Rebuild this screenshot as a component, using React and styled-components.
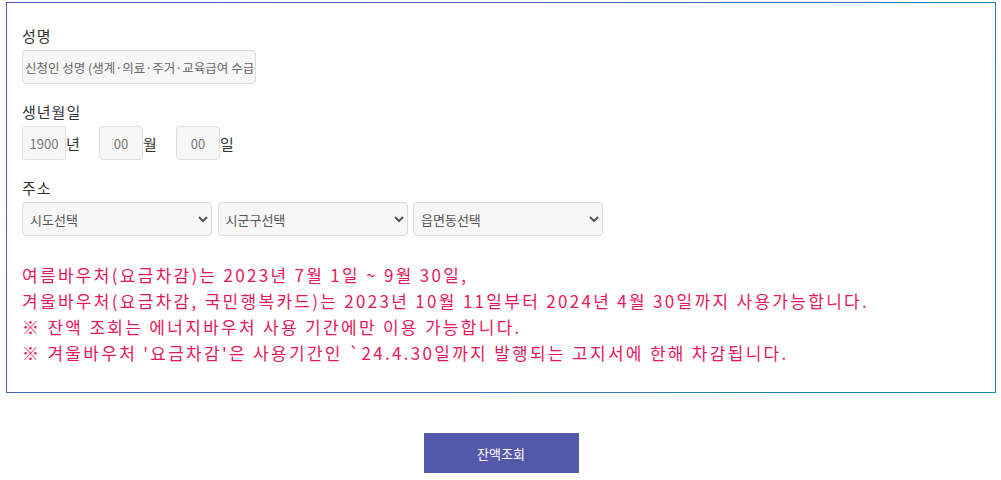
import React from 'react'
import styled, { createGlobalStyle } from 'styled-components'

const GlobalStyle = createGlobalStyle`
  body {
    margin: 0;
    background: #fff;
    font-family: "Noto Sans CJK KR", "Noto Sans", sans-serif;
    color: #333;
  }
`

const Page = styled.div`
  padding: 2px 5px 0 6px;
`

const Box = styled.div`
  border: 1px solid;
  border-image: linear-gradient(135deg, #5455b4 0%, #3a6fb0 50%, #1a8aa6 100%) 1;
  padding: 22px 15px 26px 15px;
`

const Field = styled.div`
  margin-bottom: 17px;
`

const Label = styled.div`
  font-size: 15px;
  line-height: 22px;
  letter-spacing: 1px;
  margin-bottom: 3px;
`

const TextInput = styled.input`
  box-sizing: border-box;
  width: 234px;
  height: 34px;
  padding: 0 2px;
  border: 1px solid #ddd;
  border-radius: 4px;
  background: #f7f7f7;
  font-family: inherit;
  font-size: 12.5px;
  color: #333;
  &::placeholder { color: #666; }
`

const DateRow = styled.div`
  display: flex;
  align-items: center;
`

const DateInput = styled.input`
  box-sizing: border-box;
  width: 44px;
  height: 34px;
  padding: 0;
  border: 1px solid #ddd;
  border-radius: 4px;
  background: #f7f7f7;
  font-family: inherit;
  font-size: 13px;
  text-align: center;
  color: #777;
  &::placeholder { color: #777; }
`

const Unit = styled.span`
  font-size: 15px;
  width: ${p => p.$w}px;
`

const SelectRow = styled.div`
  display: flex;
  gap: 5.5px;
`

const Select = styled.select`
  box-sizing: border-box;
  width: 190px;
  height: 34px;
  padding: 0 3px;
  border: 1px solid #ddd;
  border-radius: 4px;
  background: #f7f7f7;
  font-family: inherit;
  font-size: 13px;
  color: #555;
`

const Notice = styled.div`
  margin-top: 26px;
  color: #e8175d;
  font-size: 17px;
  line-height: 26px;
  letter-spacing: 2.3px;
`

const ButtonRow = styled.div`
  display: flex;
  justify-content: center;
  padding-top: 40px;
`

const SubmitButton = styled.button`
  width: 155px;
  height: 40px;
  border: none;
  background: #5458a8;
  color: #fff;
  font-family: inherit;
  font-size: 13px;
  cursor: pointer;
`

export default function App() {
  return (
    <>
      <GlobalStyle />
      <Page>
        <Box>
          <Field>
            <Label>성명</Label>
            <TextInput placeholder="신청인 성명 (생계·의료·주거·교육급여 수급자는 세대주 성명)" />
          </Field>
          <Field>
            <Label>생년월일</Label>
            <DateRow>
              <DateInput placeholder="1900" />
              <Unit $w={33}>년</Unit>
              <DateInput placeholder="00" />
              <Unit $w={33}>월</Unit>
              <DateInput placeholder="00" />
              <Unit>일</Unit>
            </DateRow>
          </Field>
          <Field>
            <Label>주소</Label>
            <SelectRow>
              <Select defaultValue=""><option value="">시도선택</option></Select>
              <Select defaultValue=""><option value="">시군구선택</option></Select>
              <Select defaultValue=""><option value="">읍면동선택</option></Select>
            </SelectRow>
          </Field>
          <Notice>
            여름바우처(요금차감)는 2023년 7월 1일 ~ 9월 30일,<br />
            겨울바우처(요금차감, 국민행복카드)는 2023년 10월 11일부터 2024년 4월 30일까지 사용가능합니다.<br />
            ※ 잔액 조회는 에너지바우처 사용 기간에만 이용 가능합니다.<br />
            ※ 겨울바우처 '요금차감'은 사용기간인 `24.4.30일까지 발행되는 고지서에 한해 차감됩니다.
          </Notice>
        </Box>
        <ButtonRow>
          <SubmitButton>잔액조회</SubmitButton>
        </ButtonRow>
      </Page>
    </>
  )
}
